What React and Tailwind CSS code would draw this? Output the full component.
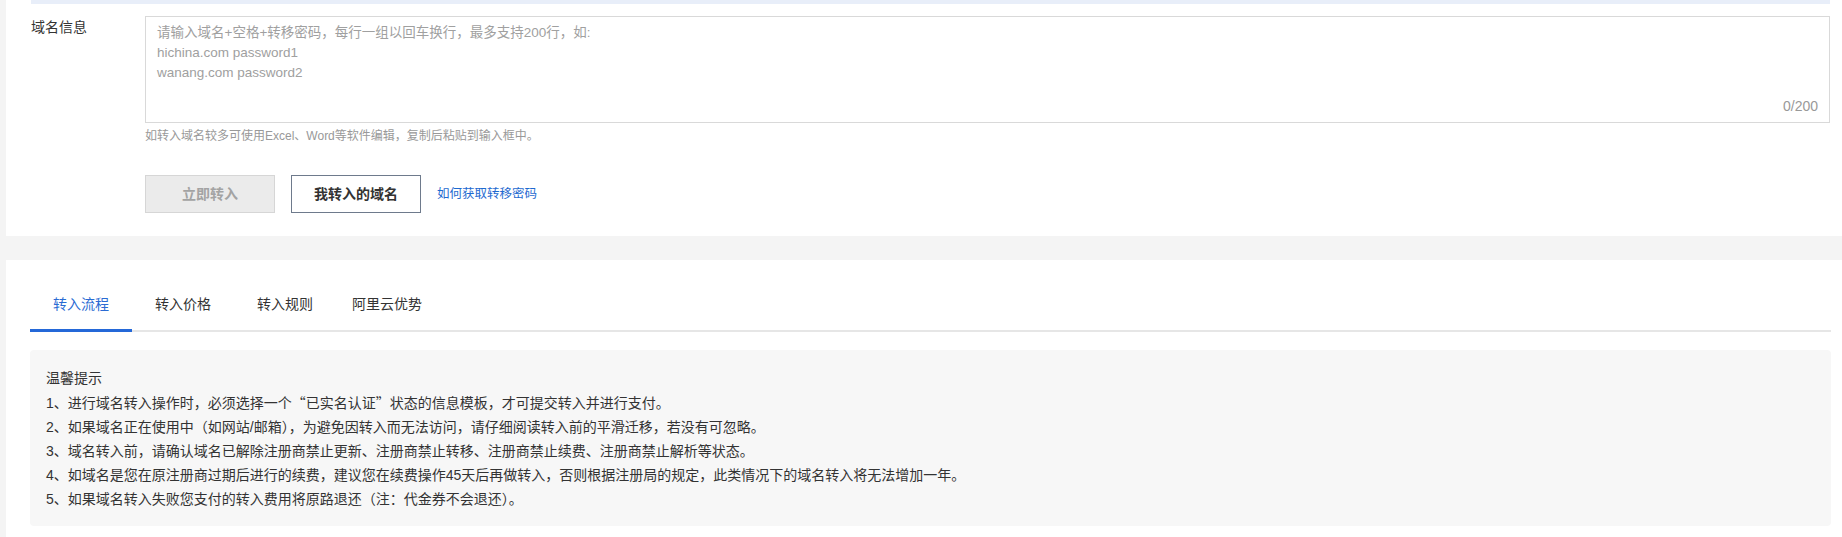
const FONT = '"Liberation Sans", "Noto Sans CJK SC", sans-serif';
const CJK = '"Noto Sans CJK SC", sans-serif';

const tabs = ['转入流程', '转入价格', '转入规则', '阿里云优势'];

const notes = [
  <>1、进行域名转入操作时，必须选择一个<span style={{ fontFamily: CJK }}>“</span>已实名认证<span style={{ fontFamily: CJK }}>”</span>状态的信息模板，才可提交转入并进行支付。</>,
  '2、如果域名正在使用中（如网站/邮箱），为避免因转入而无法访问，请仔细阅读转入前的平滑迁移，若没有可忽略。',
  '3、域名转入前，请确认域名已解除注册商禁止更新、注册商禁止转移、注册商禁止续费、注册商禁止解析等状态。',
  '4、如域名是您在原注册商过期后进行的续费，建议您在续费操作45天后再做转入，否则根据注册局的规定，此类情况下的域名转入将无法增加一年。',
  '5、如果域名转入失败您支付的转入费用将原路退还（注：代金券不会退还）。',
];

export default function App() {
  const active = 0;

  return (
    <div className="min-h-screen flex flex-col bg-[#f4f4f4] text-[#333]" style={{ fontFamily: FONT }}>
      {/* Form panel */}
      <div className="ml-[6px] bg-white pl-[25px] pr-[12px] pb-[23px]">
        <div className="h-[4px] bg-[#e8eef9]" />
        <div className="flex mt-[12px]">
          <div className="w-[114px] shrink-0 pt-[1px] text-[14px] leading-[20px]">域名信息</div>
          <div className="flex-1">
            <div className="relative h-[107px] border border-[#d9d9d9]">
              <textarea
                className="block w-full h-full resize-none outline-none px-[11px] pt-[6px] text-[13.5px] leading-[20px] text-[#333] placeholder:text-[#a0a0a0]"
                style={{ fontFamily: FONT }}
                placeholder={'请输入域名+空格+转移密码，每行一组以回车换行，最多支持200行，如:\nhichina.com password1\nwanang.com password2'}
              />
              <span className="absolute right-[11px] bottom-[6px] text-[14px] leading-[20px] text-[#999]">0/200</span>
            </div>
            <div className="mt-[3px] text-[12px] leading-[20px] text-[#999]">
              如转入域名较多可使用Excel、Word等软件编辑，复制后粘贴到输入框中。
            </div>
            <div className="flex items-center mt-[29px]">
              <button className="w-[130px] h-[38px] bg-[#ebebeb] border border-[#d6d6d6] text-[14px] font-bold text-[#a3a3a3]">
                立即转入
              </button>
              <button className="ml-[16px] w-[130px] h-[38px] bg-white border border-[#6e7a8c] text-[14px] font-bold text-[#333]">
                我转入的域名
              </button>
              <a href="#" className="ml-[16px] text-[12.5px] text-[#1e6ad0]">如何获取转移密码</a>
            </div>
          </div>
        </div>
      </div>

      {/* Tabs panel */}
      <div className="flex-1 mt-[24px] ml-[6px] bg-white pl-[24px] pr-[11px] pt-[20px] pb-[12px]">
        <div className="flex border-b-2 border-[#e6e6e6]">
          {tabs.map((t, i) => (
            <div
              key={t}
              className={`w-[102px] h-[52px] -mb-[2px] flex items-center justify-center text-[14px] border-b-[3px] ${
                i === active ? 'border-[#2468d8] text-[#2a6bd3]' : 'border-transparent text-[#333]'
              }`}
            >
              {t}
            </div>
          ))}
        </div>

        <div className="mt-[18px] rounded-[4px] bg-[#f7f7f7] px-[16px] pt-[16px] pb-[15px] text-[14px] leading-[24px] text-[#333]">
          <div>温馨提示</div>
          {notes.map((n, i) => (
            <div key={i}>{n}</div>
          ))}
        </div>
      </div>
    </div>
  );
}
